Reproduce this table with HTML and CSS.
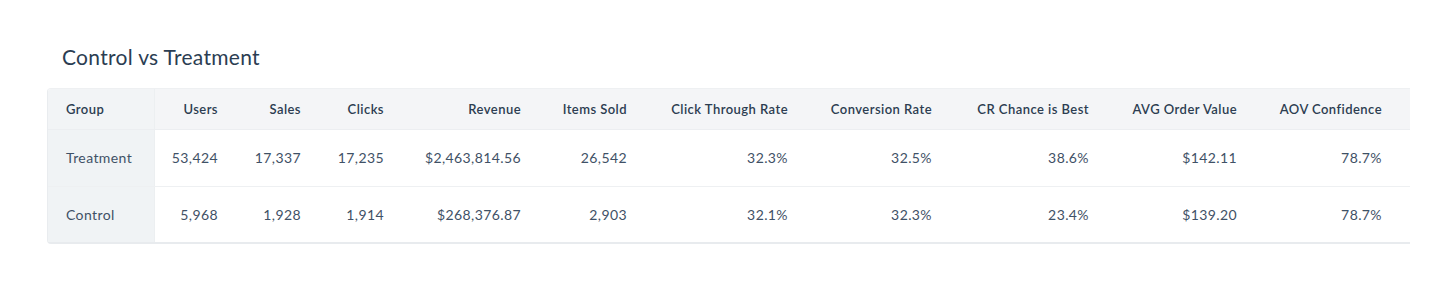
FILE: index.html
```html
<!DOCTYPE html>
<html lang="en">
<head>
<meta charset="utf-8">
<title>Control vs Treatment</title>
<link rel="stylesheet" href="styles.css">
</head>
<body>
<main class="page">
  <h2 class="title">Control vs Treatment</h2>
  <div class="card">
    <table class="grid">
      <colgroup>
        <col class="w-group"><col class="w-users"><col class="w-sales"><col class="w-clicks"><col class="w-rev"><col class="w-items"><col class="w-ctr"><col class="w-cr"><col class="w-crc"><col class="w-aov"><col class="w-conf">
      </colgroup>
      <thead>
        <tr>
          <th class="group">Group</th>
          <th>Users</th>
          <th>Sales</th>
          <th>Clicks</th>
          <th>Revenue</th>
          <th>Items Sold</th>
          <th>Click Through Rate</th>
          <th>Conversion Rate</th>
          <th>CR Chance is Best</th>
          <th>AVG Order Value</th>
          <th class="last">AOV Confidence</th>
        </tr>
      </thead>
      <tbody>
        <tr>
          <td class="group">Treatment</td>
          <td>53,424</td>
          <td>17,337</td>
          <td>17,235</td>
          <td>$2,463,814.56</td>
          <td>26,542</td>
          <td>32.3%</td>
          <td>32.5%</td>
          <td>38.6%</td>
          <td>$142.11</td>
          <td class="last">78.7%</td>
        </tr>
        <tr>
          <td class="group">Control</td>
          <td>5,968</td>
          <td>1,928</td>
          <td>1,914</td>
          <td>$268,376.87</td>
          <td>2,903</td>
          <td>32.1%</td>
          <td>32.3%</td>
          <td>23.4%</td>
          <td>$139.20</td>
          <td class="last">78.7%</td>
        </tr>
      </tbody>
    </table>
  </div>
</main>
</body>
</html>
```

FILE: styles.css
```css
* { box-sizing: border-box; }
html, body { margin: 0; padding: 0; background: #ffffff; }
body {
  font-family: "Lato", "Open Sans", "Liberation Sans", sans-serif;
  color: #3d4e62;
}
.page {
  padding: 44px 0 0 47px;
}
.title {
  margin: 0 0 18px 15px;
  font-size: 21px;
  line-height: 26px;
  font-weight: 400;
  letter-spacing: 0.3px;
  color: #2b3d52;
}
.card {
  width: 1363px;
  overflow: hidden;
  border-radius: 4px 0 0 4px;
  border-left: 1px solid #e9ecef;
  border-top: 1px solid #eef0f2;
  border-bottom: 2px solid #e8ebee;
}
.grid {
  width: 1362px;
  table-layout: fixed;
  border-collapse: collapse;
}
.w-group { width: 106px; }
.w-users { width: 80px; }
.w-sales { width: 83px; }
.w-clicks { width: 83px; }
.w-rev { width: 137px; }
.w-items { width: 106px; }
.w-ctr { width: 161px; }
.w-cr { width: 144px; }
.w-crc { width: 157px; }
.w-aov { width: 148px; }
.w-conf { width: 157px; }
th, td {
  padding: 0 16px 0 0;
  text-align: right;
  white-space: nowrap;
}
th {
  height: 40px;
  background: #f4f5f7;
  font-size: 13px;
  font-weight: 600;
  letter-spacing: 0.45px;
  color: #2c3d51;
  border-bottom: 1px solid #eceef1;
}
td {
  height: 57px;
  font-size: 14px;
  font-weight: 400;
  letter-spacing: 0.4px;
  color: #3f5166;
  border-bottom: 1px solid #eef0f2;
}
tbody tr:last-child td { border-bottom: none; height: 56px; }
.group {
  text-align: left;
  padding: 0 0 0 18px;
  background: #f0f3f5;
  border-right: 1px solid #eceff1;
}
th.group { background: #f2f4f6; }
.last { padding-right: 28px; }
```
